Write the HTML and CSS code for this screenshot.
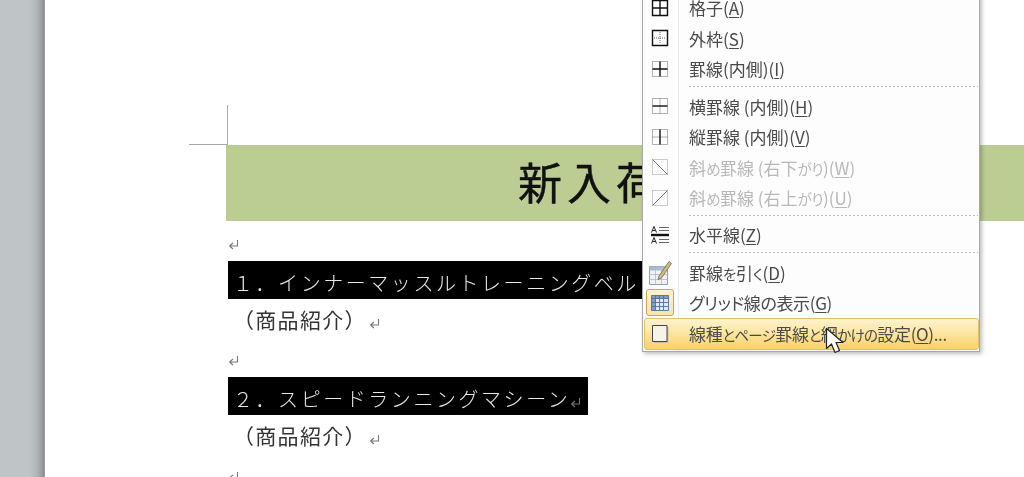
FILE: index.html
```html
<!DOCTYPE html>
<html lang="ja">
<head>
<meta charset="utf-8">
<title>新入荷</title>
<link rel="stylesheet" href="styles.css">
</head>
<body>
<svg class="defs" width="0" height="0" aria-hidden="true"><symbol id="ret" viewBox="0 0 12 11"><path d="M9.500 1v6h-8M1.500 7l3.500-3M1.500 7l3.500 3"/></symbol></svg>
<div class="workspace">
  <div class="gutter"></div>
  <main class="page">
    <div class="crop"></div>
    <div class="banner"><span class="title">新入荷</span></div>
    <div class="doc">
      <p class="line first"><svg class="ret"><use href="#ret"/></svg></p>
      <p class="line bar"><span class="hl">１．インナーマッスルトレーニングベルト<svg class="ret"><use href="#ret"/></svg></span></p>
      <p class="line sub">（商品紹介）<svg class="ret"><use href="#ret"/></svg></p>
      <p class="line gap"><svg class="ret"><use href="#ret"/></svg></p>
      <p class="line bar"><span class="hl">２．スピードランニングマシーン<svg class="ret"><use href="#ret"/></svg></span></p>
      <p class="line sub">（商品紹介）<svg class="ret"><use href="#ret"/></svg></p>
      <p class="line gap"><svg class="ret"><use href="#ret"/></svg></p>
    </div>
  </main>
  <nav class="menu">
    <div class="item"><span class="ico"><svg viewBox="0 0 18 18"><path class="k" d="M1.500 1.500h15v15h-15zM9 1.500v15M1.500 9h15"/></svg></span><span class="lbl">格子(<u>A</u>)</span></div>
    <div class="item"><span class="ico"><svg viewBox="0 0 18 18"><path class="d" d="M9 3v12M3 9h12"/><path class="k" d="M1.500 1.500h15v15h-15z"/></svg></span><span class="lbl">外枠(<u>S</u>)</span></div>
    <div class="item"><span class="ico"><svg viewBox="0 0 18 18"><path class="d" d="M1.500 1.500h15v15h-15z"/><path class="k" d="M9 1.500v15M1.500 9h15"/></svg></span><span class="lbl">罫線(内側)(<u>I</u>)</span></div>
    <div class="sep"></div>
    <div class="item"><span class="ico"><svg viewBox="0 0 18 18"><path class="d" d="M1.500 1.500h15v15h-15zM9 1.500v15"/><path class="k" d="M1.500 9h15"/></svg></span><span class="lbl">横罫線 (内側)(<u>H</u>)</span></div>
    <div class="item"><span class="ico"><svg viewBox="0 0 18 18"><path class="d" d="M1.500 1.500h15v15h-15zM1.500 9h15"/><path class="k" d="M9 1.500v15"/></svg></span><span class="lbl">縦罫線 (内側)(<u>V</u>)</span></div>
    <div class="item off"><span class="ico"><svg viewBox="0 0 18 18"><path class="d" d="M1.500 1.500h15v15h-15z"/><path class="g" d="M1.500 1.500l15 15"/></svg></span><span class="lbl">斜<span class="kn">め</span>罫線 (右下<span class="kn">がり</span>)(<u>W</u>)</span></div>
    <div class="item off"><span class="ico"><svg viewBox="0 0 18 18"><path class="d" d="M1.500 1.500h15v15h-15z"/><path class="g" d="M1.500 16.500l15-15"/></svg></span><span class="lbl">斜<span class="kn">め</span>罫線 (右上<span class="kn">がり</span>)(<u>U</u>)</span></div>
    <div class="sep"></div>
    <div class="item"><span class="ico"><svg class="wide" viewBox="0 0 20 20"><path class="heavy" d="M1 10h18"/><path class="l" d="M9 2.500h10M9 5.500h10M9 14.500h10M9 17.500h10"/><path class="a" d="M1.500 7.500l2.500-6 2.500 6M2.500 5.500h3M1.500 18.500l2.500-6 2.500 6M2.500 16.500h3"/></svg></span><span class="lbl">水平線(<u>Z</u>)</span></div>
    <div class="sep"></div>
    <div class="item"><span class="ico"><svg class="big" viewBox="0 0 24 26"><path class="tf" d="M1.500 7.500h18v18h-18z"/><path class="th" d="M1.500 7.500h18v4h-18z"/><path class="tl" d="M1.500 15.500h18M1.500 20.500h18M7.500 7.500v18M13.500 7.500v18"/><path class="pen" d="M11 17l10-14.500 2.500 2-10 14.500-3.500 1.500z"/></svg></span><span class="lbl">罫線<span class="kn">を</span>引<span class="kn">く</span>(<u>D</u>)</span></div>
    <div class="item"><span class="ico checked"><svg class="wide" viewBox="0 0 20 18"><path class="gf" d="M1.500 1.500h17v15h-17z"/><path class="gh" d="M1.500 1.500h17v3h-17zM1.500 1.500h4v15h-4z"/><path class="gl" d="M1.500 1.500h17v15h-17zM1.500 4.500h17M1.500 8.500h17M1.500 12.500h17M5.500 1.500v15M9.500 1.500v15M13.500 1.500v15"/></svg></span><span class="lbl tight">グリッド線の表示(<u>G</u>)</span></div>
    <div class="item hot"><span class="ico"><svg class="doc-ico" viewBox="0 0 18 20"><path class="sh" d="M3 3h14.500v16h-14.500z"/><path class="ln" d="M1.500 1.500h14.500v16h-14.500z"/></svg></span><span class="lbl tight">線種<span class="kn">とページ</span>罫線<span class="kn">と</span>網<span class="kn">かけの</span>設定(<u>O</u>)...</span></div>
  </nav>
  <svg class="cursor" viewBox="0 0 20 28"><path d="M1.500 1.500v20l5-4.500 3.500 8.500 4.500-2-3.500-8h7z"/></svg>
</div>
</body>
</html>
```
FILE: styles.css
```css
* { box-sizing: border-box; }
html, body { margin: 0; height: 477px; overflow: hidden; background: #fff; }
body { font-family: "Noto Sans CJK JP", "Noto Sans", sans-serif; }
.defs { position: absolute; }

.workspace { position: relative; display: flex; height: 477px; overflow: hidden; filter: blur(.35px); }
.gutter { width: 45px; flex: none; background: linear-gradient(90deg, #bfc4c7 0, #bfc4c7 28px, #b3b7ba 36px, #9a9da0 42px, #88898c 44px, #a8a9ab 45px); }
.page { flex: 1; min-width: 0; background: #fff; padding-top: 105px; }

.crop { width: 39px; height: 40px; margin-left: 144px; border-right: 1px solid #a9a9a9; border-bottom: 1px solid #a9a9a9; }
.banner { margin-left: 181px; height: 76px; background: #bccd94; padding-left: 292px; white-space: nowrap; }
.title { font-size: 44px; font-weight: 400; -webkit-text-stroke: .4px #111; line-height: 72px; letter-spacing: 5px; color: #111; }

.doc { margin-left: 183px; }
.line { margin: 0; white-space: nowrap; font-size: 20px; }
.ret { width: 12px; height: 11px; fill: none; stroke: #777; stroke-width: 1.100; }
.first { height: 40px; line-height: 20px; padding-top: 18px; }
.first .ret, .gap .ret { display: block; }
.gap { height: 37px; padding-top: 15px; }
.bar { height: 38px; }
.hl { display: inline-block; height: 38px; line-height: 43px; background: #000; color: #e8e8e8; font-weight: 300; padding: 0 6px 0 5px; letter-spacing: 2.550px; }
.hl .ret { vertical-align: -1px; }
.sub { height: 41px; line-height: 41px; padding-left: 5px; font-size: 21px; color: #333; letter-spacing: 1.300px; }
.sub .ret { margin-left: 2px; vertical-align: -1px; }

.menu { position: absolute; left: 642px; top: -8.500px; width: 338px; padding: 0 1px 1px; display: flex; flex-direction: column; background: #fdfdfd; border: 1px solid #a8a8a8; box-shadow: 2px 2px 4px rgba(0,0,0,.25); background-image: linear-gradient(#e9e9e9, #e9e9e9); background-size: 1px 100%; background-position: 35px 0; background-repeat: no-repeat; }
.item { display: flex; align-items: center; height: 30.600px; flex: none; font-size: 17px; color: #4a4a4a; white-space: nowrap; }
.sep { height: 6.500px; flex: none; margin-left: 45px; background: linear-gradient(#bbb, #bbb) 0 2px / 100% 1px no-repeat; -webkit-mask: repeating-linear-gradient(90deg, #000 0 2px, transparent 2px 4px); mask: repeating-linear-gradient(90deg, #000 0 2px, transparent 2px 4px); }
.ico { width: 28px; height: 26px; margin-left: 2px; margin-right: 15px; display: flex; align-items: center; justify-content: center; flex: none; }
.ico svg { width: 18px; height: 18px; fill: none; display: block; overflow: visible; }
.ico .wide { width: 20px; height: 20px; }
.ico .big { width: 24px; height: 26px; }
.ico .doc-ico { width: 18px; height: 20px; }
.lbl { font-feature-settings: "palt"; letter-spacing: 0; }
.tight { letter-spacing: -.35px; }
.kn { font-size: 14.500px; letter-spacing: -.4px; }
.tight .kn { letter-spacing: -.7px; }
.lbl u { text-underline-offset: 2px; text-decoration-thickness: 1px; }
.off { color: #b8b8b8; }

.k { stroke: #111; stroke-width: 1.400; }
.d { stroke: #666; stroke-width: 1; stroke-dasharray: 1 1; }
.off .d { stroke: #999; }
.g { stroke: #777; stroke-width: 1; }
.heavy { stroke: #111; stroke-width: 2.400; }
.l { stroke: #666; stroke-width: 1; }
.a { stroke: #222; stroke-width: 1; }
.tf { fill: #eef2f7; stroke: #8ca0b8; }
.th { fill: #a9bcd4; }
.tl { stroke: #a9bad0; stroke-width: .8; }
.pen { fill: #d8b978; stroke: #6a6a5a; stroke-width: .8; }
.checked { height: 27px; border: 1px solid #c9a658; border-radius: 3px; background: linear-gradient(#fdf2d2, #fbe3a8); }
.gf { fill: #dfe9f6; }
.gh { fill: #7f9cc9; }
.gl { stroke: #4f6f9f; stroke-width: .9; }
.hot { margin: 0 -1px 0 0; height: 32px; border: 1px solid #dcc06a; border-radius: 3px; background: linear-gradient(#fdf3cf 0, #fce6a0 45%, #fad06a 100%); }
.hot .ico { margin-left: 1px; }
.sh { fill: #c8bea0; }
.ln { fill: #f6f3ea; stroke: #444; stroke-width: 1; }

.cursor { position: absolute; left: 825px; top: 327px; width: 20px; height: 28px; }
.cursor path { fill: #fff; stroke: #222; stroke-width: 1.200; stroke-linejoin: round; }
```
